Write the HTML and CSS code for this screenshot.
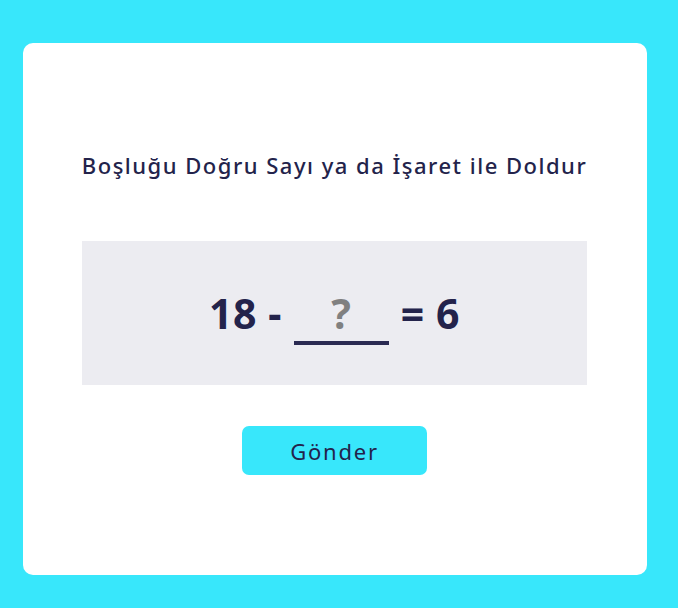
FILE: index.html
```html
<!DOCTYPE html>
<html lang="tr">
<head>
<meta charset="utf-8">
<link rel="stylesheet" href="styles.css">
</head>
<body>
<main class="card">
  <h1 class="title">Boşluğu Doğru Sayı ya da İşaret ile Doldur</h1>
  <div class="puzzle">
    <span class="term">18 -</span>
    <span class="blank">?</span>
    <span class="term">= 6</span>
  </div>
  <button class="submit" type="button">Gönder</button>
</main>
</body>
</html>
```
FILE: styles.css
```css
html, body {
  margin: 0;
  padding: 0;
}
body {
  background: #38e7fb;
  width: 678px;
  height: 608px;
  box-sizing: border-box;
  padding: 43px 31px 33px 23px;
  font-family: "Noto Sans", "Open Sans", sans-serif;
  color: #23234b;
}
.card {
  box-sizing: border-box;
  height: 532px;
  background: #ffffff;
  border-radius: 10px;
  display: flex;
  flex-direction: column;
  align-items: center;
  padding: 107px 60px 0 59px;
}
.title {
  margin: 0;
  font-size: 22px;
  font-weight: 500;
  line-height: 30px;
  letter-spacing: 1.5px;
  white-space: nowrap;
}
.puzzle {
  margin-top: 61px;
  align-self: stretch;
  height: 144px;
  background: #ececf1;
  display: flex;
  align-items: baseline;
  justify-content: center;
  gap: 12px;
  box-sizing: border-box;
  padding-top: 44px;
  font-size: 41px;
  font-weight: 700;
  line-height: 56px;
  letter-spacing: 0.5px;
}
.blank {
  display: inline-block;
  width: 95px;
  text-align: center;
  border-bottom: 4px solid #2a2a52;
  color: #808080;
  line-height: 56px;
}
.submit {
  margin-top: 41px;
  width: 185px;
  height: 49px;
  border: none;
  border-radius: 7px;
  background: #38e7fb;
  color: #23234b;
  font-family: "Noto Sans", "Open Sans", sans-serif;
  font-size: 22px;
  font-weight: 400;
  letter-spacing: 1.8px;
}
```
